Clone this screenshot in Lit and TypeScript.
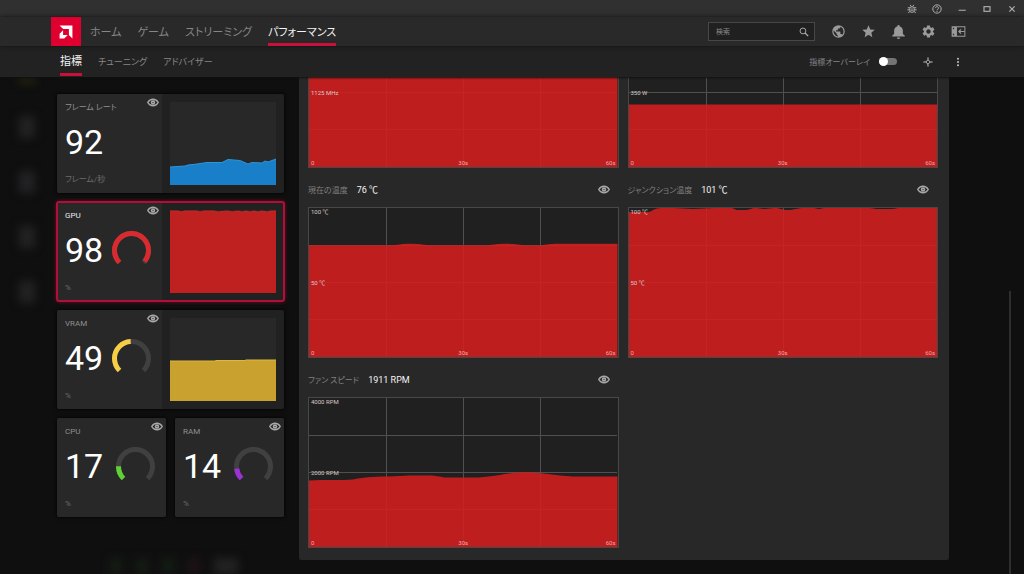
import { LitElement, html, css, svg } from "lit";
import { customElement, property } from "lit/decorators.js";
import { classMap } from "lit/directives/class-map.js";

const EYE = svg`
  <path d="M1.500 9C4 4.400 7.500 2.500 12 2.500S20 4.400 22.500 9c-2.500 4.600-6 6.500-10.500 6.500S4 13.600 1.500 9z" fill="none" stroke="currentColor" stroke-width="2.800"/>
  <circle cx="12" cy="9" r="4.400" fill="currentColor"/>
  <circle cx="12" cy="9" r="1.200" fill="#282828"/>`;

const eyeIcon = () => html`<svg class="eye" viewBox="0 0 24 18" aria-hidden="true">${EYE}</svg>`;

const ICONS = {
  bug: svg`<g fill="none" stroke="currentColor" stroke-width="2.400"><rect x="7" y="7" width="10" height="13" rx="4"/><path d="M8 2l2 4.500M16 2l-2 4.500M2 9h5M17 9h5M1 14h6M17 14h6M3 21l4-3M21 21l-4-3M10 12h4M10 16h4"/></g>`,
  help: svg`<circle cx="12" cy="12" r="10" fill="none" stroke="currentColor" stroke-width="2.400"/><path d="M8.500 9.800a3.500 3.500 0 1 1 5.300 3c-1.200.8-1.800 1.300-1.800 2.400M12 16.500v2.200" fill="none" stroke="currentColor" stroke-width="2.400"/>`,
  min: svg`<path d="M4 15h17" stroke="currentColor" stroke-width="2.400"/>`,
  max: svg`<rect x="3" y="5" width="18" height="14" fill="none" stroke="currentColor" stroke-width="3.400"/>`,
  close: svg`<path d="M4 4l16 16M20 4L4 20" stroke="currentColor" stroke-width="3.400"/>`,
  search: svg`<circle cx="9.500" cy="9.500" r="7" fill="none" stroke="currentColor" stroke-width="2.200"/><path d="M14.500 14.500L22 22" stroke="currentColor" stroke-width="3"/>`,
  earth: svg`<path fill="currentColor" d="M17.900 17.390c-.26-.8-1.010-1.390-1.900-1.390h-1v-3a1 1 0 0 0-1-1H8v-2h2a1 1 0 0 0 1-1V7h2a2 2 0 0 0 2-2v-.41c2.930 1.180 5 4.050 5 7.410 0 2.080-.8 3.970-2.100 5.390M11 19.930C7.050 19.440 4 16.080 4 12c0-.62.080-1.220.21-1.790L9 15v1a2 2 0 0 0 2 2m1-16A10 10 0 1 0 12 22 10 10 0 0 0 12 2z"/>`,
  star: svg`<path fill="currentColor" d="M12 17.270L18.180 21l-1.640-7.030L22 9.240l-7.190-.61L12 2 9.190 8.630 2 9.240l5.460 4.730L5.820 21z"/>`,
  bell: svg`<path fill="currentColor" d="M22 18.500V20H2v-1.500L5 16v-5.500c0-3.100 2-5.600 5-6.400V3.500a2 2 0 0 1 4 0v.6c3 .8 5 3.300 5 6.400V16zM14.500 21.500a2.500 2.500 0 0 1-5 0z"/>`,
  gear: svg`<path fill="currentColor" d="M19.140 12.940c.04-.3.06-.61.06-.94 0-.32-.02-.64-.07-.94l2.030-1.580c.18-.14.23-.41.12-.61l-1.920-3.320c-.12-.22-.37-.29-.59-.22l-2.390.96c-.5-.38-1.030-.7-1.620-.94l-.36-2.540c-.04-.24-.24-.41-.48-.41h-3.840c-.24 0-.43.17-.47.41l-.36 2.540c-.59.24-1.130.57-1.620.94l-2.390-.96c-.22-.08-.47 0-.59.22L2.740 8.870c-.12.21-.08.47.12.61l2.030 1.580c-.05.3-.09.63-.09.94s.02.64.07.94l-2.030 1.580c-.18.14-.23.41-.12.61l1.920 3.320c.12.22.37.29.59.22l2.390-.96c.5.38 1.030.7 1.620.94l.36 2.540c.05.24.24.41.48.41h3.840c.24 0 .44-.17.47-.41l.36-2.540c.59-.24 1.130-.56 1.620-.94l2.390.96c.22.08.47 0 .59-.22l1.920-3.320c.12-.22.07-.47-.12-.61l-2.010-1.580zM12 15.600c-1.980 0-3.600-1.620-3.600-3.600s1.620-3.600 3.600-3.600 3.600 1.620 3.600 3.600-1.620 3.600-3.600 3.600z"/>`,
  dock: svg`<path fill="currentColor" fill-rule="evenodd" d="M1 3.500h22v17H1zM9.500 5.300v13.400h11.900V5.300zM3 6v2.500h2V6zM3 15.500V18h2v-2.500z"/><path d="M22 12H12M16 8.500L12.500 12l3.500 3.500" fill="none" stroke="currentColor" stroke-width="1.800"/>`,
  target: svg`<path d="M12 6.500l5.500 5.500-5.500 5.500L6.500 12zM12 1v5.500M12 17.500V23M1 12h5.500M17.500 12H23" fill="none" stroke="currentColor" stroke-width="2.400"/>`,
  more: svg`<g fill="currentColor"><circle cx="12" cy="4" r="2.400"/><circle cx="12" cy="12" r="2.400"/><circle cx="12" cy="20" r="2.400"/></g>`,
};

type IconName = keyof typeof ICONS;

const iconButton = (name: IconName, label: string) => html`
  <button class="icon-button ${name}" type="button" aria-label=${label}>
    <svg viewBox="0 0 24 24" aria-hidden="true">${ICONS[name]}</svg>
  </button>`;

const reset = css`
  * {
    box-sizing: border-box;
  }
  button {
    margin: 0;
    padding: 0;
    border: 0;
    background: none;
    color: inherit;
    font: inherit;
    display: grid;
    place-items: center;
  }
  svg {
    display: block;
  }
  .eye {
    width: 12px;
    height: 9px;
    color: #a8a8a8;
  }
`;

interface Metric {
  name: string;
  value: number;
  unit: string;
  color?: string;
  showGauge?: boolean;
  spark?: { area: string; fill: string; line: string };
  active?: boolean;
}

@customElement("metric-card")
export class MetricCard extends LitElement {
  @property({ attribute: false }) metric!: Metric;

  static styles = [
    reset,
    css`
      :host {
        display: block;
        min-width: 0;
      }
      .card {
        display: flex;
        height: 99px;
        border-radius: 2px;
        background: #212121;
        overflow: hidden;
        box-shadow: 0 0 4px #000;
      }
      .card.active {
        outline: 2px solid #b00f3a;
        outline-offset: -1px;
        box-shadow: 0 0 4px #c00038;
      }
      .summary {
        flex: 1;
        display: grid;
        grid-template-rows: 24px 48px 27px;
        padding-left: 8px;
        background: #282828;
      }
      .head {
        display: flex;
        justify-content: space-between;
        align-items: flex-start;
        padding: 4px 3px 0 0;
      }
      .name {
        color: #8f8f8f;
        font-size: 8px;
        line-height: 19px;
        white-space: nowrap;
      }
      .active .name {
        color: #e8e8e8;
      }
      .reading {
        display: flex;
        align-items: center;
        justify-content: space-between;
        padding-right: 11px;
      }
      .value {
        color: #fff;
        font-size: 34px;
        line-height: 48px;
      }
      .gauge {
        width: 39px;
        height: 39px;
      }
      .unit {
        color: #6c6c6c;
        font-size: 8px;
        line-height: 27px;
      }
      .plot {
        flex: 0 0 122px;
        padding: 8px;
      }
      .spark {
        width: 100%;
        height: 83px;
        background: #282828;
      }
    `,
  ];

  render() {
    const { name, value, unit, color, showGauge, spark, active } = this.metric;
    return html`
      <article class=${classMap({ card: true, active: !!active })}>
        <div class="summary">
          <div class="head">
            <span class="name">${name}</span>
            <button type="button" aria-label=${name}>${eyeIcon()}</button>
          </div>
          <div class="reading">
            <span class="value">${value}</span>
            ${showGauge
              ? html`<svg class="gauge" viewBox="0 0 39 39" fill="none" stroke-width="5" aria-hidden="true">
                  <path d="M7.500 31.500A17 17 0 1 1 31.500 31.500" stroke="#404040" />
                  <path d="M7.500 31.500A17 17 0 1 1 31.500 31.500" stroke=${color ?? ""} pathLength="100" stroke-dasharray="${value} 200" />
                </svg>`
              : null}
          </div>
          <span class="unit">${unit}</span>
        </div>
        ${spark
          ? html`<div class="plot">
              <svg class="spark" viewBox="0 0 106 83" preserveAspectRatio="none" aria-hidden="true">
                <path d="M0 83L${spark.area}L106 83z" fill=${spark.fill} />
                <path d="M${spark.area}" fill="none" stroke=${spark.line} />
              </svg>
            </div>`
          : null}
      </article>
    `;
  }
}

interface Chart {
  title?: string;
  value?: string;
  top?: string;
  middle: string;
  area: string;
}

@customElement("history-chart")
export class HistoryChart extends LitElement {
  @property({ attribute: false }) chart!: Chart;

  static styles = [
    reset,
    css`
      :host {
        display: block;
        min-width: 0;
      }
      .head {
        display: flex;
        align-items: center;
        gap: 9px;
        height: 39px;
        padding: 4px 9px 0 0;
        white-space: nowrap;
      }
      .title {
        margin: 0;
        color: #808080;
        font-size: 8px;
        font-weight: 400;
      }
      .value {
        flex: 1;
        color: #f4f4f4;
        font-size: 9px;
      }
      .plot {
        display: grid;
        height: 151px;
        border: 1px solid #484848;
        background: #202020;
      }
      .plot > * {
        grid-area: 1 / 1;
      }
      .lines {
        width: 100%;
        height: 149px;
      }
      .grid {
        stroke: #505050;
        shape-rendering: crispEdges;
      }
      .grid path {
        vector-effect: non-scaling-stroke;
      }
      .fill {
        fill: #d41e1e;
        opacity: 0.88;
      }
      .scale {
        display: flex;
        flex-direction: column;
        justify-content: space-between;
        padding: 0 2px;
        color: #d8c8c8;
        font-size: 6px;
        line-height: 8px;
      }
      .scale > * {
        min-height: 8px;
      }
      .time {
        display: grid;
        grid-template-columns: 1fr auto 1fr;
        color: #f0a8a8;
      }
      .time :last-child {
        text-align: right;
      }
    `,
  ];

  render() {
    const { title, value, top, middle, area } = this.chart;
    return html`
      ${title
        ? html`<div class="head">
            <h3 class="title">${title}</h3>
            <span class="value">${value}</span>
            <button type="button" aria-label=${title}>${eyeIcon()}</button>
          </div>`
        : null}
      <div class="plot">
        <svg class="lines" viewBox="0 0 310 150" preserveAspectRatio="none" aria-hidden="true">
          <g class="grid">
            <path d="M77.500 0V150" /><path d="M155 0V150" /><path d="M232.500 0V150" />
            <path d="M0 37.500H310" /><path d="M0 75H310" /><path d="M0 112.500H310" />
          </g>
          <path class="fill" d="M0 150L${area}L310 150z" />
        </svg>
        <div class="scale">
          <span>${top}</span>
          <span>${middle}</span>
          <div class="time"><span>0</span><span>30s</span><span>60s</span></div>
        </div>
      </div>
    `;
  }
}

const METRICS: Metric[] = [
  {
    name: "フレーム レート",
    value: 92,
    unit: "フレーム/秒",
    spark: {
      area: "0 65L15 64L18 63L27 62L37 60.500L52 60.500L58 57.500L70 58.500L78 62L82 60.500L92 61L95 59L98 60L106 57",
      fill: "#197fc9",
      line: "#2f95d8",
    },
  },
  {
    name: "GPU",
    value: 98,
    unit: "%",
    color: "#d92b2f",
    showGauge: true,
    active: true,
    spark: {
      area: "0 1L8 1L11 2L15 1L27 1L30 2L34 1L44 1L48 2L57 1L62 2L68 1L72 2L76 1L80 2L84 1L88 2L92 1L97 2L101 1L106 1",
      fill: "#bf2020",
      line: "#c92626",
    },
  },
  {
    name: "VRAM",
    value: 49,
    unit: "%",
    color: "#f7cf46",
    showGauge: true,
    spark: { area: "0 43L45 43L46 42.500L75 42.500L76 42L106 42", fill: "#c8a12e", line: "#dcb840" },
  },
];

const SMALL_METRICS: Metric[] = [
  { name: "CPU", value: 17, unit: "%", color: "#5fd035", showGauge: true },
  { name: "RAM", value: 14, unit: "%", color: "#9a32d8", showGauge: true },
];

const CHARTS: Chart[] = [
  { middle: "1125 MHz", area: "0 0L310 0" },
  { middle: "350 W", area: "0 87L310 87" },
  {
    title: "現在の温度",
    value: "76 ℃",
    top: "100 ℃",
    middle: "50 ℃",
    area: "0 37.500L86 37.500C94 36 98 36 103 36C110 36 114 37 120 37.500L180 37.500C190 36 194 36 200 36C206 36 210 37 216 37.500L232 37.500C240 37 242 36 250 36L310 36",
  },
  {
    title: "ジャンクション温度",
    value: "101 ℃",
    top: "100 ℃",
    middle: "50 ℃",
    area: "0 4L20 4C24 3 26 0 32 0L44 0C52 0 58 1 64 1C72 1 78 0 86 0L102 0C106 0 106 2 110 2L116 2C122 2 122 0 128 0L136 1L146 0C152 0 154 2 160 2C166 2 168 0 178 0L186 0L191 1L196 0L240 0C246 0 246 1 250 1L264 1C268 1 268 0 272 0L310 0",
  },
  {
    title: "ファン スピード",
    value: "1911 RPM",
    top: "4000 RPM",
    middle: "2000 RPM",
    area: "0 83C16 82 34 83 44 82C54 80 62 79 80 79C96 78 106 78 120 78C130 78 132 80 140 80L170 80C190 79 196 76 210 75C224 74 234 76 244 77C256 78.500 262 79 272 79L310 79",
  },
];

@customElement("app-root")
export class AppRoot extends LitElement {
  static styles = [
    reset,
    css`
      :host {
        display: flex;
        flex-direction: column;
        position: relative;
        height: 100vh;
        overflow: hidden;
        background: #0f0f0f;
        color: #9a9a9a;
        font-family: Roboto, "Noto Sans CJK JP", sans-serif;
        font-feature-settings: "palt";
      }
      a {
        color: #868686;
        text-decoration: none;
        white-space: nowrap;
      }
      .title-bar {
        display: flex;
        justify-content: flex-end;
        height: 17px;
        background: #303030;
      }
      .title-bar .icon-button {
        width: 25px;
        height: 17px;
        color: #b0b0b0;
      }
      .title-bar svg {
        width: 10px;
        height: 10px;
      }
      .title-bar .close svg,
      .title-bar .max svg {
        width: 8px;
        height: 8px;
      }
      .nav-bar {
        z-index: 2;
        display: flex;
        align-items: center;
        height: 29px;
        padding: 0 51px;
        background: #292929;
        box-shadow: 0 0 4px #111;
      }
      .brand {
        display: grid;
        place-items: center;
        width: 30px;
        height: 29px;
        background: #e00030;
      }
      .brand svg {
        width: 14px;
        height: 14px;
      }
      .links {
        display: flex;
        flex: 1;
        height: 100%;
      }
      .links a {
        display: block;
        height: 100%;
        border-bottom: 3px solid transparent;
      }
      .links .current {
        border-color: #c8103c;
        color: #f4f4f4;
      }
      .nav-bar .links {
        gap: 16px;
        padding-left: 9px;
        font-size: 11px;
        line-height: 32px;
      }
      .search {
        display: flex;
        align-items: center;
        width: 107px;
        height: 19px;
        margin-right: 8px;
        padding: 0 5px 0 7px;
        border: 1px solid #474747;
        background: #202020;
      }
      .search input {
        flex: 1;
        min-width: 0;
        padding: 0;
        border: 0;
        outline: 0;
        background: none;
        color: #ddd;
        font: inherit;
        font-size: 7px;
      }
      .search input::placeholder {
        color: #8a8a8a;
      }
      .search svg {
        width: 10px;
        height: 10px;
        color: #b0b0b0;
      }
      .nav-bar .icon-button,
      .sub-bar .icon-button {
        width: 30px;
        height: 29px;
      }
      .nav-bar .icon-button svg {
        width: 15px;
        height: 15px;
      }
      .sub-bar .icon-button svg {
        width: 10px;
        height: 10px;
        color: #c4c4c4;
      }
      .sub-bar {
        z-index: 1;
        display: flex;
        align-items: center;
        height: 31px;
        padding: 0 51px 0 60px;
        background: #222;
        box-shadow: 0 1px 2px #111;
      }
      .sub-bar .links {
        gap: 16px;
        padding-bottom: 1px;
        font-size: 9px;
        line-height: 32px;
      }
      .sub-bar .links .current {
        font-size: 11px;
      }
      .overlay {
        display: flex;
        align-items: center;
        gap: 9px;
        margin-right: 16px;
        color: #868686;
        font-size: 8px;
      }
      .overlay input {
        appearance: none;
        display: flex;
        align-items: center;
        width: 18px;
        height: 7px;
        margin: 0;
        border-radius: 4px;
        background: #757575;
      }
      .overlay input::before {
        content: "";
        width: 9px;
        height: 9px;
        border-radius: 50%;
        background: #fff;
      }
      .workspace {
        z-index: 0;
        display: flex;
        flex: 1;
        min-height: 0;
      }
      .desktop {
        display: flex;
        flex: 0 0 57px;
        flex-direction: column;
        align-items: center;
        gap: 33px;
        padding-right: 4px;
      }
      .shadow {
        width: 16px;
        height: 22px;
        background: #222224;
        filter: blur(4px);
      }
      .shadow.amber {
        height: 6px;
        background: #2a2810;
      }
      .taskbar {
        position: absolute;
        bottom: 0;
        left: 110px;
        z-index: 0;
        display: flex;
        gap: 14px;
        filter: blur(4px);
      }
      .taskbar span {
        width: 12px;
        height: 16px;
        background: #141c14;
      }
      .taskbar .red {
        background: #1e1216;
      }
      .taskbar .pale {
        width: 24px;
        background: #222;
      }
      .metrics {
        display: grid;
        flex: 0 0 227px;
        grid-template-columns: 1fr 1fr;
        align-content: start;
        gap: 9px;
        padding-top: 17px;
      }
      .wide {
        grid-column: span 2;
      }
      .scroller {
        display: flex;
        flex: 1;
        flex-direction: column;
        justify-content: flex-end;
        min-width: 0;
        margin-left: 15px;
        padding-bottom: 14px;
        overflow: hidden;
      }
      .panel {
        display: grid;
        flex: none;
        grid-template-columns: minmax(0, 1fr) minmax(0, 1fr);
        column-gap: 9px;
        padding: 0 11px 12px 9px;
        border-radius: 2px;
        background: #282828;
      }
      .rail {
        display: flex;
        flex: 0 0 75px;
        align-items: flex-end;
        justify-content: flex-end;
        padding-right: 13px;
      }
      .thumb {
        width: 2px;
        height: 57%;
        background: #2e2e2e;
      }
    `,
  ];

  render() {
    return html`
      <header class="title-bar">
        ${iconButton("bug", "bug")} ${iconButton("help", "help")} ${iconButton("min", "minimize")}
        ${iconButton("max", "maximize")} ${iconButton("close", "close")}
      </header>
      <div class="nav-bar">
        <a class="brand" href="#home" aria-label="AMD">
          <svg viewBox="0 0 24 24" fill="#fff" aria-hidden="true">
            <path d="M1 1h22v22l-6-6V7H7z" />
            <path d="M7 9v8h8l-6 6H1v-8z" />
          </svg>
        </a>
        <nav class="links">
          <a href="#home">ホーム</a>
          <a href="#games">ゲーム</a>
          <a href="#streaming">ストリーミング</a>
          <a class="current" href="#performance" aria-current="page">パフォーマンス</a>
        </nav>
        <label class="search">
          <input type="search" placeholder="検索" aria-label="検索" />
          <svg viewBox="0 0 24 24" aria-hidden="true">${ICONS.search}</svg>
        </label>
        ${iconButton("earth", "web")} ${iconButton("star", "favorites")} ${iconButton("bell", "notifications")}
        ${iconButton("gear", "settings")} ${iconButton("dock", "dock")}
      </div>
      <div class="sub-bar">
        <nav class="links">
          <a class="current" href="#metrics" aria-current="page">指標</a>
          <a href="#tuning">チューニング</a>
          <a href="#advisor">アドバイザー</a>
        </nav>
        <label class="overlay">指標オーバーレイ<input type="checkbox" role="switch" /></label>
        ${iconButton("target", "target")} ${iconButton("more", "more")}
      </div>
      <main class="workspace">
        <div class="desktop" aria-hidden="true">
          <div class="shadow amber"></div>
          <div class="shadow"></div>
          <div class="shadow"></div>
          <div class="shadow"></div>
          <div class="shadow"></div>
        </div>
        <aside class="metrics">
          ${METRICS.map((m) => html`<metric-card class="wide" .metric=${m}></metric-card>`)}
          ${SMALL_METRICS.map((m) => html`<metric-card .metric=${m}></metric-card>`)}
        </aside>
        <section class="scroller">
          <div class="panel">${CHARTS.map((c) => html`<history-chart .chart=${c}></history-chart>`)}</div>
        </section>
        <div class="rail"><div class="thumb"></div></div>
      </main>
      <div class="taskbar" aria-hidden="true">
        <span></span><span></span><span></span><span class="red"></span><span class="pale"></span>
      </div>
    `;
  }
}
